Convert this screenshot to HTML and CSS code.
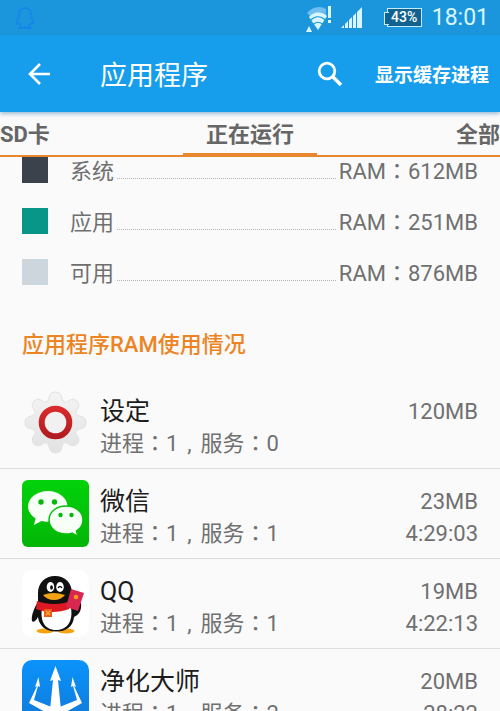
FILE: index.html
```html
<!DOCTYPE html>
<html lang="zh-CN">
<head>
    <meta charset="UTF-8">
    <meta name="viewport" content="width=device-width, initial-scale=1.0">
    <title>应用程序</title>
    <link rel="stylesheet" href="styles.css">
</head>
<body>
    <div class="screen">
        <div class="status-bar">
            <svg class="notify-icon" width="20" height="24" viewBox="0 0 20 24">
                <path d="M10 2C6 2 4 5 4 9v2c-2 3-3 5-2 7l2-1 2 3-2 2h5l1-1 1 1h5l-2-2 2-3 2 1c1-2 0-4-2-7V9c0-4-2-7-6-7z" fill="none" stroke="#1384ec" stroke-width="1.3"/>
            </svg>
            <svg class="wifi-icon" width="26" height="28" viewBox="0 0 26 28">
                <path d="M1 9C6 3 14 1 20 5v5C14 7 8 8 4 12z" fill="#70bff0"/>
                <path d="M3 13c5-6 13-6 18-1l-9 14z" fill="#d9f6ff"/>
                <path d="M4 16.500c5-5 11-5 16 0M7 20.500c4-3 6-3 10 0" fill="none" stroke="#1b96dc" stroke-width="1.200"/>
                <path d="M0 28l3-6 3 6z" fill="#d9f6ff"/>
                <path d="M22 2h3v12h-3zM22 16h3v3h-3z" fill="#d9f6ff"/>
            </svg>
            <svg class="signal-icon" width="22" height="22" viewBox="0 0 22 22">
                <path d="M0 21l3-3v3zM4 17l3-3v7H4zM8 13l3-3v11H8zM12 9l3-3v15h-3zM16 5l5-5v21h-5z" fill="#d9f6ff"/>
            </svg>
            <div class="battery">43%</div>
            <div class="clock">18:01</div>
        </div>

        <header class="app-bar">
            <button type="button" class="icon-btn" aria-label="返回">
                <svg width="24" height="24" viewBox="0 0 24 24">
                    <path d="M23 12H3M13 2L3 12l10 10" fill="none" stroke="#fff" stroke-width="2.6"/>
                </svg>
            </button>
            <h1>应用程序</h1>
            <button type="button" class="icon-btn" aria-label="搜索">
                <svg width="26" height="26" viewBox="0 0 26 26">
                    <circle cx="10" cy="10" r="7.8" fill="none" stroke="#fff" stroke-width="2.8"/>
                    <path d="M15.5 15.5L24 24" stroke="#fff" stroke-width="3.6"/>
                </svg>
            </button>
            <button type="button" class="action-btn">显示缓存进程</button>
        </header>

        <nav class="tabs">
            <a href="#sd">SD卡</a>
            <a href="#running" class="active">正在运行</a>
            <a href="#all">全部</a>
        </nav>

        <main>
            <ul class="legend">
                <li>
                    <span class="swatch system"></span>
                    <span>系统</span>
                    <span class="dots"></span>
                    <span>RAM<span class="mark">：</span>612MB</span>
                </li>
                <li>
                    <span class="swatch apps"></span>
                    <span>应用</span>
                    <span class="dots"></span>
                    <span>RAM<span class="mark">：</span>251MB</span>
                </li>
                <li>
                    <span class="swatch free"></span>
                    <span>可用</span>
                    <span class="dots"></span>
                    <span>RAM<span class="mark">：</span>876MB</span>
                </li>
            </ul>

            <h2>应用程序RAM使用情况</h2>

            <ul class="app-list">
                <li>
                    <svg class="app-icon" viewBox="0 0 67 67">
                        <defs>
                            <linearGradient id="gear" x1="0" y1="0" x2="0" y2="1">
                                <stop offset="0" stop-color="#f4f4f4"/>
                                <stop offset="1" stop-color="#e2e2e3"/>
                            </linearGradient>
                            <linearGradient id="ring" x1="0" y1="0" x2="0" y2="1">
                                <stop offset="0" stop-color="#d92b2b"/>
                                <stop offset="1" stop-color="#b01c20"/>
                            </linearGradient>
                        </defs>
                        <path d="M28 5q1-3 5.500-3t5.500 3l1.500 5q1 3 4 2l4.500-2.500q3-1.500 6 1.500t1.500 6L54 21.500q-1 3 2 4l5 1.500q3 1 3 5.500t-3 5.500l-5 1.500q-3 1-2 4l2.500 4.500q1.500 3-1.500 6t-6 1.500L44.500 53q-3-1-4 2L39 60q-1 3-5.500 3T28 60l-1.500-5q-1-3-4-2L18 55.500q-3 1.500-6-1.500t-1.500-6l2.500-4.500q1-3-2-4L6 38q-3-1-3-5.500T6 27l5-1.500q3-1 2-4L10.500 17q-1.500-3 1.500-6t6-1.500l4.500 2.500q3 1 4-2z" fill="url(#gear)" stroke="#e2e2e2" stroke-width="1"/>
                        <circle cx="33.500" cy="32.500" r="13.800" fill="#f1f1f2" stroke="url(#ring)" stroke-width="6"/>
                    </svg>
                    <div class="app-info">
                        <div class="line">
                            <span class="name">设定</span>
                            <span>120MB</span>
                        </div>
                        <div class="line">
                            <span>进程<span class="mark">：</span>1<span class="mark">,</span>服务<span class="mark">：</span>0</span>
                        </div>
                    </div>
                </li>
                <li>
                    <svg class="app-icon" viewBox="0 0 67 67">
                        <defs>
                            <linearGradient id="wechat" x1="0" y1="0" x2="0" y2="1">
                                <stop offset="0" stop-color="#02d20b"/>
                                <stop offset="1" stop-color="#03b507"/>
                            </linearGradient>
                        </defs>
                        <rect width="67" height="67" rx="6" fill="url(#wechat)"/>
                        <path d="M26 11C15 11 6 18 6 26.500c0 5 3 9 7.500 12L12 45l7.500-4c2 .5 4 .8 6.500.8 11 0 19.500-7 19.500-15.300S37 11 26 11z" fill="#f7fff7"/>
                        <path d="M44 26c-9.500 0-17 6-17 14s7.500 14 17 14c2 0 4-.3 6-.9l6 3.400-1.500-5.500C58.500 48.500 61 44.500 61 40c0-8-7.500-14-17-14z" fill="#f7fff7" stroke="#05bf0a" stroke-width="1.500"/>
                        <g fill="#04b80b">
                            <circle cx="19" cy="22" r="2.700"/>
                            <circle cx="32.500" cy="22" r="2.700"/>
                            <circle cx="38.500" cy="35" r="2.200"/>
                            <circle cx="49.500" cy="35" r="2.200"/>
                        </g>
                    </svg>
                    <div class="app-info">
                        <div class="line">
                            <span class="name">微信</span>
                            <span>23MB</span>
                        </div>
                        <div class="line">
                            <span>进程<span class="mark">：</span>1<span class="mark">,</span>服务<span class="mark">：</span>1</span>
                            <span>4:29:03</span>
                        </div>
                    </div>
                </li>
                <li>
                    <svg class="app-icon" viewBox="0 0 67 67">
                        <rect width="67" height="67" rx="10" fill="#fff"/>
                        <ellipse cx="23" cy="61" rx="8.500" ry="2.500" fill="#f6a313"/>
                        <ellipse cx="44" cy="61" rx="8.500" ry="2.500" fill="#f6a313"/>
                        <path d="M33 6c-10 0-17 7-17 17v9c-4 6-7 14-6 19 1 2 4 0 6-4 1 9 8 14.500 18 14.500S51 57 52 47c5-2 8-7 7-14l-9-2v-8C50 13 43 6 33 6z" fill="#111"/>
                        <path d="M20 38h29c2 12-3 22-15 22S18 50 20 38z" fill="#fff"/>
                        <path d="M15 31c10 4 24 4 34 0l-2 8c-10 4-23 4-33 0z" fill="#dc1822"/>
                        <path d="M22 39h8v8h-8z" fill="#ed5a1c"/>
                        <path d="M24 41l4 4m0-4l-4 4" stroke="#f9b233" stroke-width="1.200"/>
                        <ellipse cx="28.500" cy="17" rx="3.800" ry="5" fill="#fff"/>
                        <ellipse cx="38" cy="17" rx="3.800" ry="5" fill="#fff"/>
                        <ellipse cx="29.500" cy="17.500" rx="1.400" ry="2.200" fill="#111"/>
                        <path d="M36 18q2-3 4 0" fill="none" stroke="#111" stroke-width="1.300"/>
                        <path d="M21 25q10-4 22 0-4 5-11 5t-11-5z" fill="#f6a313"/>
                        <path d="M49 19l13 4-6 18-12-4z" fill="#d92850"/>
                        <circle cx="54" cy="27" r="2.300" fill="#f79a1c"/>
                    </svg>
                    <div class="app-info">
                        <div class="line">
                            <span class="name">QQ</span>
                            <span>19MB</span>
                        </div>
                        <div class="line">
                            <span>进程<span class="mark">：</span>1<span class="mark">,</span>服务<span class="mark">：</span>1</span>
                            <span>4:22:13</span>
                        </div>
                    </div>
                </li>
                <li>
                    <svg class="app-icon" viewBox="0 0 67 67">
                        <defs>
                            <linearGradient id="cleaner" x1="0" y1="0" x2="0" y2="1">
                                <stop offset="0" stop-color="#0a93fb"/>
                                <stop offset="1" stop-color="#1178d6"/>
                            </linearGradient>
                        </defs>
                        <rect width="67" height="67" rx="10" fill="url(#cleaner)"/>
                        <path d="M33.500 6l5.500 15-3-1 3 30-2 12h-7l-2-12 3-30-3 1z" fill="#fff"/>
                        <path d="M16.500 17l1.500 10-2-1-4 14 20 8v9L7 43l8-17-2 1zM50.500 17L49 27l2-1 4 14-20 8v9l25-14-8-17 2 1z" fill="#fff"/>
                    </svg>
                    <div class="app-info">
                        <div class="line">
                            <span class="name">净化大师</span>
                            <span>20MB</span>
                        </div>
                        <div class="line">
                            <span>进程<span class="mark">：</span>1<span class="mark">,</span>服务<span class="mark">：</span>2</span>
                            <span>28:22</span>
                        </div>
                    </div>
                </li>
            </ul>
        </main>
    </div>
</body>
</html>
```
FILE: styles.css
```css
* {
    margin: 0;
    padding: 0;
    box-sizing: border-box;
}

body {
    font-family: Roboto, "Noto Sans CJK SC", sans-serif;
    font-size: 22px;
    color: #707070;
    background: #fafafa;
}

ul {
    list-style: none;
}

button {
    font-family: inherit;
    color: #fff;
    background: none;
    border: none;
    cursor: pointer;
}

.screen {
    height: 100vh;
    overflow: hidden;
}

/* 状态栏 */
.status-bar {
    display: flex;
    align-items: center;
    height: 35px;
    padding: 0 11px 0 15px;
    background: #1b96dc;
    color: #d9f6ff;
}

.wifi-icon {
    margin-left: auto;
}

.signal-icon {
    margin-left: 9px;
}

.battery {
    position: relative;
    width: 35px;
    height: 19px;
    margin-left: 24px;
    border: 1px solid #c4ecfc;
    background: #12628f;
    color: #fff;
    font-size: 14px;
    font-weight: 500;
    line-height: 17px;
    text-align: center;
}

.battery::before {
    content: "";
    position: absolute;
    left: -4px;
    top: 3px;
    width: 4px;
    height: 11px;
    border: 1px solid #c4ecfc;
    border-right: none;
    background: #12628f;
}

.clock {
    margin-left: 10px;
    font-size: 23px;
    line-height: 37px;
}

/* 标题栏 */
.app-bar {
    position: relative;
    display: flex;
    align-items: center;
    height: 77px;
    padding: 0 11px 0 27px;
    background: #169dec;
    color: #fff;
    box-shadow: 0 2px 4px rgba(22, 100, 160, 0.4);
}

.app-bar h1 {
    flex: 1;
    margin-left: 49px;
    font-size: 27px;
    font-weight: 400;
}

.icon-btn {
    display: flex;
}

.action-btn {
    margin-left: 32px;
    font-size: 19px;
    font-weight: 700;
}

/* 标签页 */
.tabs {
    display: grid;
    grid-template-columns: 1fr auto 1fr;
    height: 45px;
    border-bottom: 2px solid #e8872e;
}

.tabs a {
    height: 45px;
    line-height: 46px;
    font-weight: 700;
    color: #666;
    text-decoration: none;
}

.tabs a:last-child {
    text-align: right;
}

.tabs .active {
    padding: 0 23px;
    border-bottom: 4px solid #e8872e;
}

/* 内存图例 */
.legend {
    display: grid;
    gap: 25px;
    padding: 0 22px;
}

.legend li {
    display: flex;
    height: 26px;
    line-height: 30px;
}

.swatch {
    width: 26px;
    height: 26px;
    margin-right: 22px;
}

.swatch.system {
    background: #3b424b;
}

.swatch.apps {
    background: #079688;
}

.swatch.free {
    background: #cdd6dc;
}

.dots {
    flex: 1;
    height: 22px;
    margin: 0 3px;
    border-bottom: 1px dotted #b5b5b5;
}

/* 冒号和逗号居中占一个字宽 */
.mark {
    display: inline-block;
    width: 22px;
    font-family: Roboto, "Noto Sans CJK TC", sans-serif;
    text-align: center;
}

h2 {
    padding: 44px 22px 18px;
    font-size: 22px;
    font-weight: 500;
    line-height: 32px;
    color: #ec8424;
}

/* 应用列表 */
.app-list li {
    display: flex;
    align-items: flex-end;
    padding: 11px 22px 8px;
    border-bottom: 1px solid #dedede;
}

.app-icon {
    width: 67px;
    height: 67px;
    margin: 0 11px 3px 0;
}

.app-info {
    flex: 1;
}

.line {
    display: flex;
    justify-content: space-between;
    height: 32px;
    line-height: 32px;
}

.name {
    font-size: 25px;
    color: #1c1c1c;
}
```
